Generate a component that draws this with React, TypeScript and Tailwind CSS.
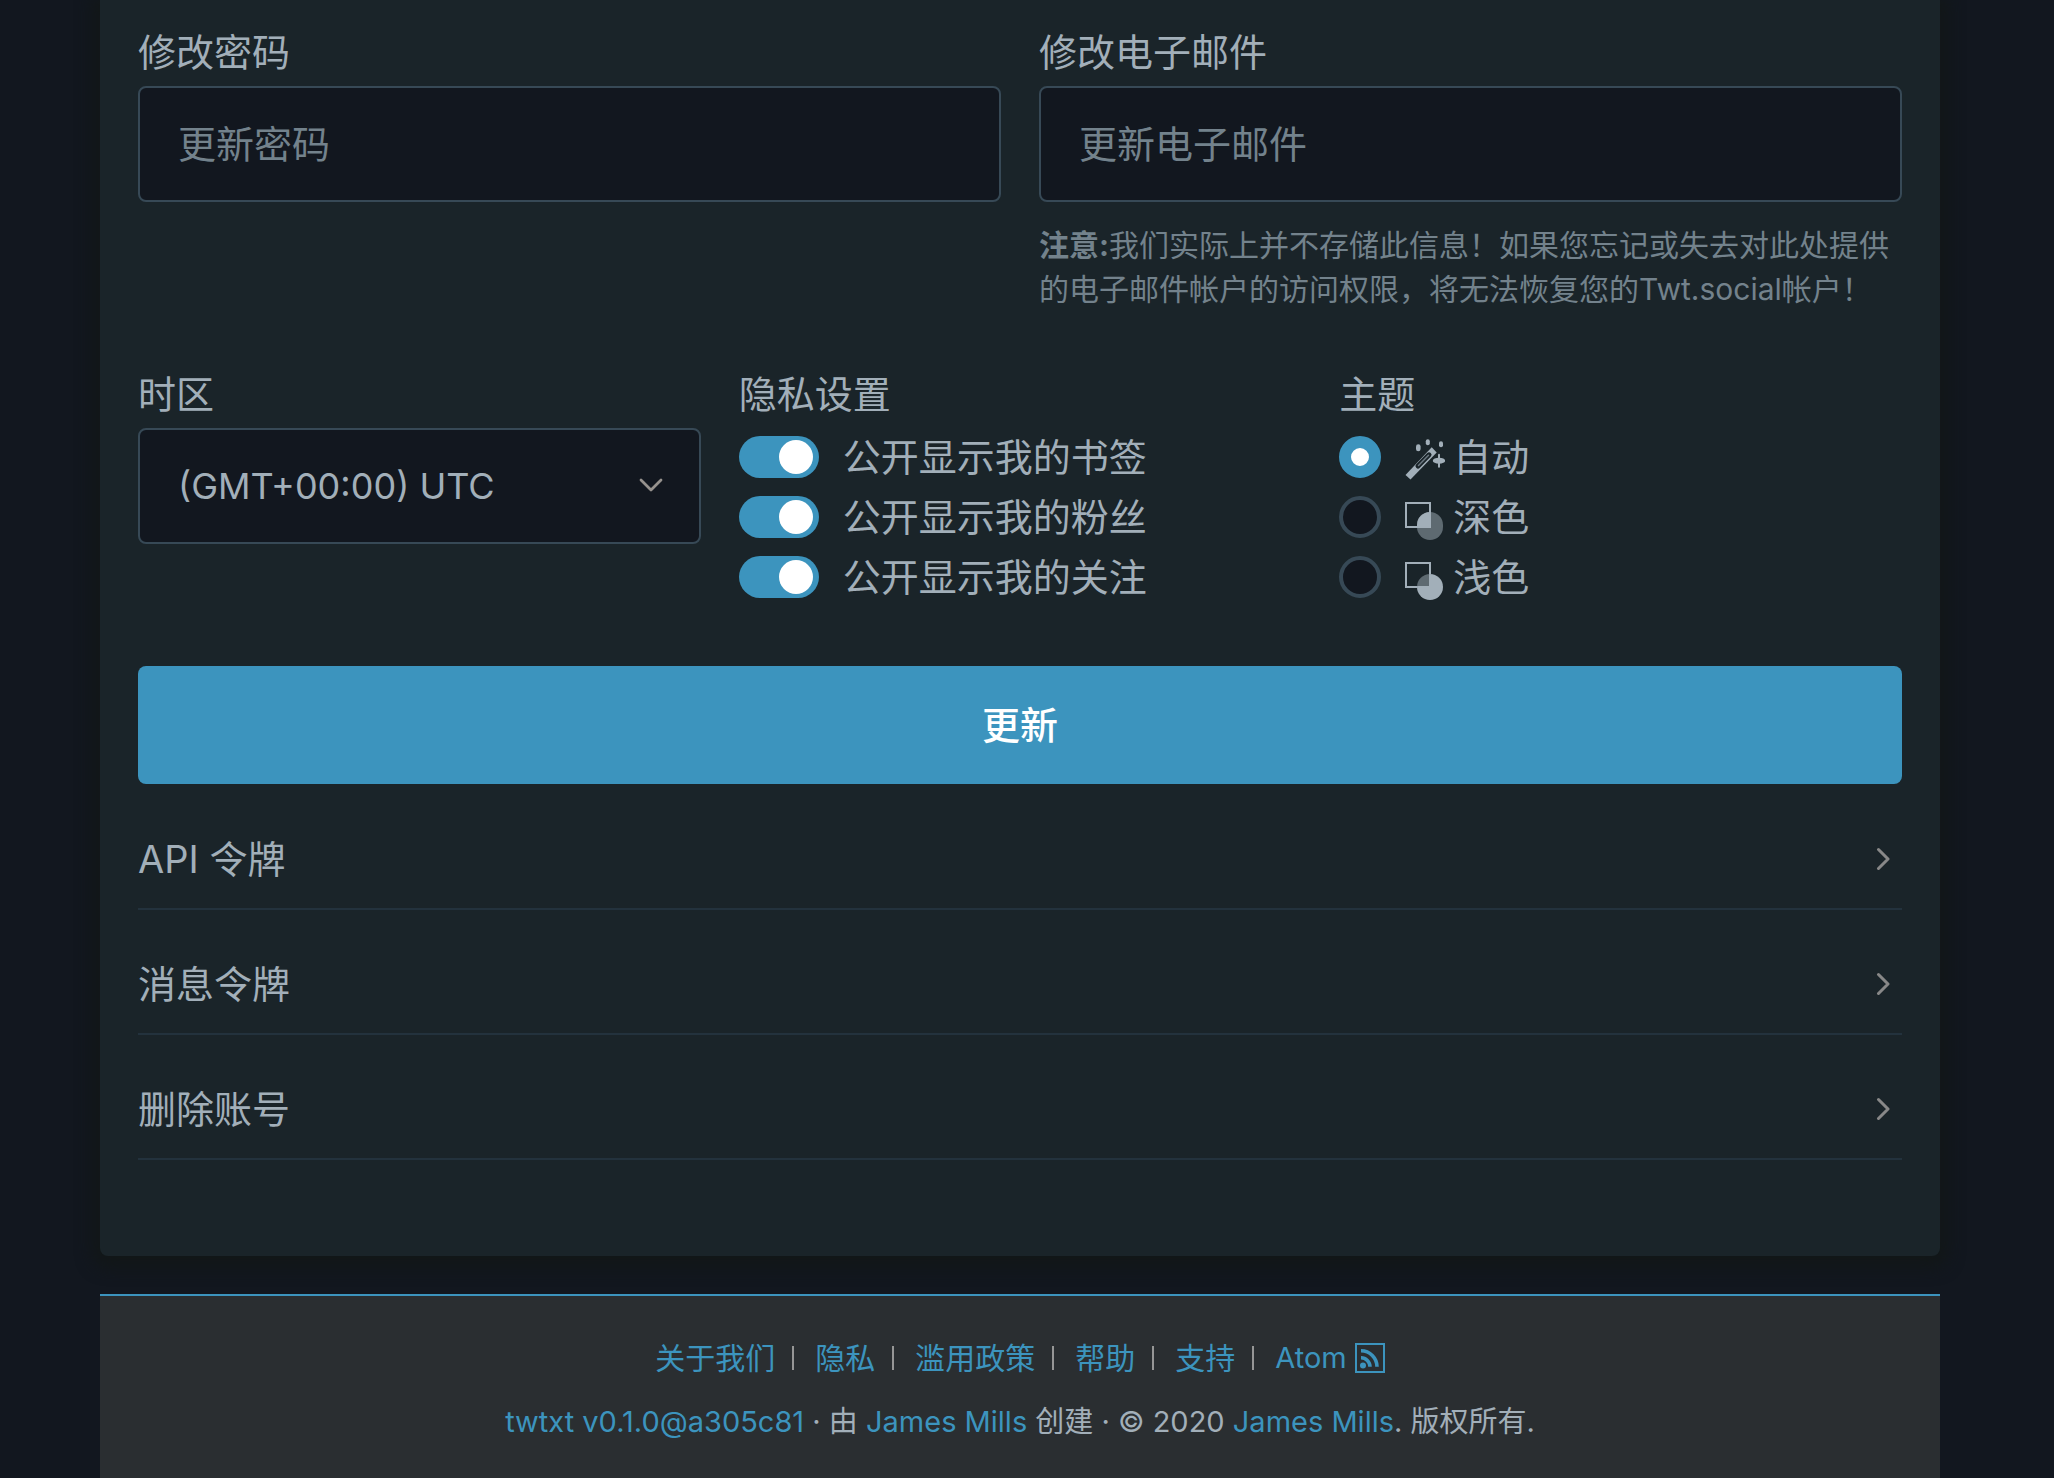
import { useState, type ReactNode } from "react";

const FIELD =
  "mt-[5px] block h-[116px] w-full appearance-none rounded-lg border-2 border-[#374956] bg-[#12171f] px-[38px] text-[#a2afb9] outline-none placeholder:text-[#73828c] placeholder:opacity-100";

function Toggle({ label }: { label: string }) {
  const [on, setOn] = useState(true);
  return (
    <label className="flex h-[60px] items-center gap-6">
      <input
        type="checkbox"
        role="switch"
        checked={on}
        onChange={(e) => setOn(e.target.checked)}
        className="flex h-[42px] w-20 shrink-0 appearance-none items-center rounded-full bg-[#374956] px-1.5 before:block before:size-[34px] before:rounded-full before:bg-white checked:justify-end checked:bg-[#3c94be]"
      />
      <span>{label}</span>
    </label>
  );
}

const THEME_ICON = "h-[46px] w-10";

function WandIcon() {
  return (
    <svg viewBox="0 0 40 46" className={THEME_ICON} fill="currentColor" aria-hidden="true">
      <path d="M0.500 41 26.700 13.300 31.700 18.500 5.500 45.500Z" />
      <g fill="none" strokeLinecap="round">
        <path d="M13 32 24 20.800" stroke="#1a2429" strokeWidth="5" />
        <path d="M13.500 31.500 23.500 21.300" stroke="#6b7780" strokeWidth="1.500" />
      </g>
      <rect x="11" y="10.200" width="4.600" height="7" rx="2.300" />
      <rect x="20.800" y="5.200" width="4" height="6" rx="2" />
      <rect x="34" y="7.200" width="4" height="6" rx="2" />
      <ellipse cx="34" cy="26.700" rx="6.200" ry="3" />
      <rect x="33" y="19.800" width="2" height="14" rx="1" />
    </svg>
  );
}

function DarkIcon() {
  return (
    <svg viewBox="0 0 40 46" className={THEME_ICON} aria-hidden="true">
      <clipPath id="dark-overlap">
        <rect x="0" y="8" width="26" height="26" />
      </clipPath>
      <rect x="1" y="9" width="24" height="24" fill="none" stroke="currentColor" strokeWidth="2" />
      <rect x="12" y="18" width="26" height="28" rx="13" fill="currentColor" opacity="0.5" />
      <rect x="12" y="18" width="26" height="28" rx="13" fill="currentColor" clipPath="url(#dark-overlap)" />
    </svg>
  );
}

function LightIcon() {
  return (
    <svg viewBox="0 0 40 46" className={THEME_ICON} aria-hidden="true">
      <mask id="light-overlap">
        <rect width="40" height="46" fill="white" />
        <rect x="0" y="8" width="24" height="24" fill="#808080" />
      </mask>
      <rect x="1" y="9" width="24" height="24" fill="none" stroke="currentColor" strokeWidth="2" />
      <rect x="12" y="20" width="26" height="26" rx="13" fill="#1a2429" />
      <rect x="12" y="20" width="26" height="26" rx="13" fill="currentColor" mask="url(#light-overlap)" />
    </svg>
  );
}

function ThemeOption({
  value,
  label,
  icon,
  selected,
  onSelect,
}: {
  value: string;
  label: string;
  icon: ReactNode;
  selected: string;
  onSelect: (v: string) => void;
}) {
  return (
    <label className="flex h-[60px] items-center">
      <input
        type="radio"
        name="theme"
        value={value}
        checked={selected === value}
        onChange={() => onSelect(value)}
        className="size-[42px] shrink-0 appearance-none rounded-full border-4 border-[#374956] bg-[#12171f] checked:border-12 checked:border-[#3c94be] checked:bg-white"
      />
      <span className="mr-2 ml-6">{icon}</span>
      <span>{label}</span>
    </label>
  );
}

function Section({ title }: { title: string }) {
  return (
    <button
      type="button"
      className="flex w-full items-center justify-between border-b-2 border-[#23323d] pt-[55px] pr-3 pb-[30px] text-left leading-[38px]"
    >
      <span>{title}</span>
      <svg viewBox="0 0 14 24" className="h-6 w-3.5 text-[#888888]" fill="none" stroke="currentColor" strokeWidth="3" strokeLinecap="round" strokeLinejoin="round" aria-hidden="true">
        <path d="M2.500 2.500 12 12l-9.500 9.500" />
      </svg>
    </button>
  );
}

const LINK = "text-[#3c94be] hover:underline";
const FOOTER_LINKS = ["关于我们", "隐私", "滥用政策", "帮助", "支持"];

export default function App() {
  const [theme, setTheme] = useState("auto");
  return (
    <div className="min-h-screen bg-[#12171f] pr-[114px] pl-[100px] font-[Inter,'Noto_Sans_CJK_SC',sans-serif] text-[38px] leading-[57px] text-[#a2afb9]">
      <main className="rounded-b-lg bg-[#1a2429] px-[38px] pt-6 pb-24 shadow-[0_4px_16px_8px_#121718]">
        <form className="pb-px" onSubmit={(e) => e.preventDefault()}>
          <div className="grid grid-cols-2 gap-[38px]">
            <div>
              <label htmlFor="password" className="block">修改密码</label>
              <input id="password" type="password" placeholder="更新密码" className={FIELD} />
            </div>
            <div>
              <label htmlFor="email" className="block">修改电子邮件</label>
              <input id="email" type="email" placeholder="更新电子邮件" className={FIELD} />
              <p className="mt-[21px] text-[30px] leading-[44px] text-[#73828c]">
                <b>注意:</b>我们实际上并不存储此信息！如果您忘记或失去对此处提供的电子邮件帐户的访问权限，将无法恢复您的Twt.social帐户！
              </p>
            </div>
          </div>

          <div className="mt-[55px] grid grid-cols-3 gap-[38px]">
            <div>
              <label htmlFor="timezone" className="block">时区</label>
              <div className="relative text-[36px]">
                <select id="timezone" className={FIELD} defaultValue="utc">
                  <option value="utc">(GMT+00:00) UTC</option>
                </select>
                <svg viewBox="0 0 24 16" className="pointer-events-none absolute top-[49px] right-[38px] h-4 w-6 text-[#96928e]" fill="none" stroke="currentColor" strokeWidth="2.8" strokeLinecap="round" strokeLinejoin="round" aria-hidden="true">
                  <path d="M2 3 12 13 22 3" />
                </svg>
              </div>
            </div>
            <fieldset>
              <legend className="mb-1">隐私设置</legend>
              <Toggle label="公开显示我的书签" />
              <Toggle label="公开显示我的粉丝" />
              <Toggle label="公开显示我的关注" />
            </fieldset>
            <fieldset>
              <legend className="mb-1">主题</legend>
              <ThemeOption value="auto" label="自动" icon={<WandIcon />} selected={theme} onSelect={setTheme} />
              <ThemeOption value="dark" label="深色" icon={<DarkIcon />} selected={theme} onSelect={setTheme} />
              <ThemeOption value="light" label="浅色" icon={<LightIcon />} selected={theme} onSelect={setTheme} />
            </fieldset>
          </div>

          <button type="submit" className="mt-[59px] block h-[118px] w-full rounded-lg bg-[#3c94be] font-medium text-white">
            更新
          </button>
        </form>

        <Section title="API 令牌" />
        <Section title="消息令牌" />
        <Section title="删除账号" />
      </main>

      <footer className="mt-[38px] border-t-2 border-[#3c94be] bg-[#2a2e31] pt-10 pb-10 text-center text-[30px] leading-[44px]">
        <nav className="flex items-center justify-center">
          {FOOTER_LINKS.map((text) => (
            <span key={text} className="mr-[21px] flex items-center gap-[17px]">
              <a href="#" className={LINK}>{text}</a>
              <span className="h-6 w-0.5 bg-[#969696]" />
            </span>
          ))}
          <a href="#" className="flex items-center gap-2 text-[29px] text-[#3c94be]">
            Atom
            <svg viewBox="0 0 30 30" className="size-[30px]" fill="none" stroke="currentColor" aria-hidden="true">
              <rect x="1" y="1" width="28" height="28" strokeWidth="2" />
              <circle cx="8" cy="22.500" r="3" fill="currentColor" stroke="none" />
              <path d="M6 14.800a9 9 0 0 1 9 9M6 7.800a16 16 0 0 1 16 16" strokeWidth="3.600" />
            </svg>
          </a>
        </nav>
        <p className="mt-5 text-[29px]">
          <a href="#" className={LINK}>twtxt v0.1.0@a305c81</a> · 由 <a href="#" className={LINK}>James Mills</a> 创建 · © 2020 <a href="#" className={LINK}>James Mills</a>. 版权所有.
        </p>
      </footer>
    </div>
  );
}
